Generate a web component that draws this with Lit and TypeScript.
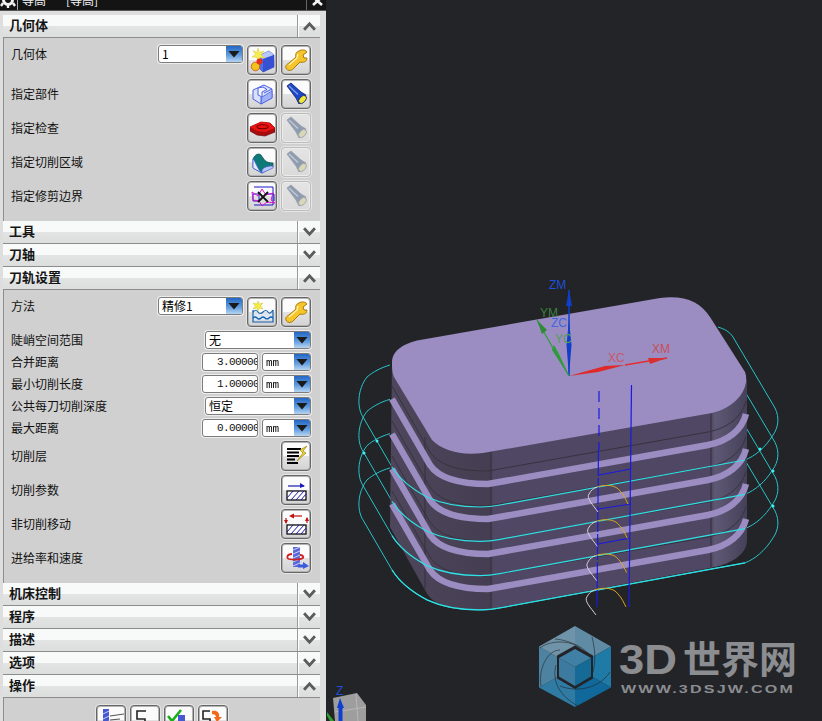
import { LitElement, html, css, svg } from "lit";
import { customElement } from "lit/decorators.js";

const torch = (body: string, dark: string, lens: string) => svg`
  <path d="M3 4 L7 1 L17 10 L22 13 L15 22 L12 16 Z" fill=${body} stroke=${dark} stroke-width=".8"/>
  <path d="M5 4 L14 12.5" stroke="#fff" stroke-opacity=".45" stroke-width="1.4"/>
  <ellipse cx="18.5" cy="17.5" rx="4.8" ry="3" transform="rotate(-48 18.5 17.5)" fill=${lens} stroke=${dark} stroke-width=".8"/>`;

const hatch = (y: number) => svg`
  <rect x="3" y=${y} width="19" height="9" fill="#fff" stroke="#000" stroke-width="1.2"/>
  <path d="M3 ${y + 7} l6 -7 M7 ${y + 9} l8 -9 M12 ${y + 9} l8 -9 M17 ${y + 9} l5 -6" stroke="#1a1aa8" stroke-width="1"/>`;

const ICONS: Record<string, unknown> = {
  geom: svg`
    <path d="M8 8 L19 3 L24 7 L24 19 L13 24 L8 19 Z" fill="#4f6fe8" stroke="#2a3aa0" stroke-width=".6"/>
    <path d="M8 8 L19 3 L24 7 L13 11 Z" fill="#b9c8fa"/><path d="M13 11 L24 7 L24 19 L13 24 Z" fill="#3550d0"/>
    <path d="M8 0 L9.5 4.5 L14 3 L11 7 L15 10 L10.5 9.5 L8 14 L7 9.5 L2 9 L5.5 6.5 L3 2.5 L7 4.5 Z" fill="#f6ee50" stroke="#d8c020" stroke-width=".4"/>
    <circle cx="5.5" cy="18.5" r="4.3" fill="#f2c21c" stroke="#c04010" stroke-width=".7"/>
    <circle cx="9.5" cy="13.5" r="3" fill="#e83018"/>`,
  wrench: svg`
    <path d="M15 3 C18 1 22 2 23 4 L19 7 L20 10 L23 10 C23 14 19 15 16 14 L9 21 C7 23 3 23 2 20 C1 18 3 16 5 15 L12 9 C11 7 12 4 15 3 Z" fill="#f6c52c" stroke="#a87808" stroke-width="1"/>
    <path d="M14 6 L13 10 L5 17" fill="none" stroke="#fff3b0" stroke-width="1.3"/>`,
  block: svg`
    <path d="M3 8 L14 3 L22 7 L22 16 L11 22 L3 17 Z" fill="#d8e0fc" stroke="#4e62e0" stroke-width="1"/>
    <path d="M8 6 L8 13 L12 15 L12 10 L17 7.5 L13 5 Z" fill="#f4f6ff" stroke="#4e62e0" stroke-width="1"/>
    <path d="M11 22 L11 15 M22 7 L14 11" stroke="#4e62e0" stroke-width="1"/>
    <path d="M11 22 L22 16 L22 9 L12 15 Z" fill="#9fb2f6" stroke="#4e62e0" stroke-width=".8"/>`,
  torch: torch("#1c48c8", "#0a1c70", "#f0e838"),
  torchOff: torch("#8f9cb0", "#98a0aa", "#d8d8b8"),
  part: svg`
    <path d="M0 11 L11 6 L20 7 L25 12 L25 16 L15 20 L7 19 L0 15 Z" fill="#a80c0c" stroke="#700808" stroke-width=".7"/>
    <path d="M0 11 L11 6 L20 7 L25 12 L15 16 L7 15 Z" fill="#ea1414"/>
    <ellipse cx="12.5" cy="10.8" rx="5.5" ry="2" fill="none" stroke="#700" stroke-width="1.1"/>`,
  surface: svg`
    <path d="M3 9 C5 4 9 3 11 5 C14 9 15 13 23 13 L23 17 L12 23 L3 18 Z" fill="#0e7a78" stroke="#0a4c50" stroke-width=".7"/>
    <path d="M3 9 C6 12 7 19 12 23 L3 18 Z" fill="#e8ecff" stroke="#4e62e0" stroke-width=".8"/>
    <path d="M12 23 C11 18 16 16 23 16 L23 18 Z" fill="#b8c6f8" stroke="#4e62e0" stroke-width=".7"/>`,
  trim: svg`
    <path d="M4 3 H23 V21 H4" fill="none" stroke="#1818c8" stroke-width="1"/>
    <path d="M3 10 H9 V17 H3 Z M17 10 H24 V17" fill="none" stroke="#1818c8" stroke-width="1"/>
    <path d="M2 8 L8 12 L12 5 L16 11 L23 9 L21 16 L25 19 L17 18 L12 22 L9 17 L3 16 Z" fill="none" stroke="#e010d0" stroke-width="1"/>
    <path d="M8 8 L18 18 M18 8 L8 18" stroke="#111" stroke-width="1.8"/>`,
  water: svg`
    <path d="M8 1 L9 4 L13 3 L10.5 6 L13 9 L9.5 8 L8 11 L7 8 L3 9 L5.5 6 L3 3 L7 4 Z" fill="#f4ec40" stroke="#c8b820" stroke-width=".4"/>
    <path d="M3 14 H23 V20 H3 Z" fill="#dce8f4"/>
    <path d="M3 10 V22 H23 V10" fill="none" stroke="#1460b0" stroke-width="1.2"/>
    <path d="M3 12 q3 -3 5 0 t5 0 t5 0 t5 -2 M3 18 q2 -2 4 0 t4 0 t4 0 t4 0 t4 0" fill="none" stroke="#1460b0" stroke-width="1.2"/>`,
  levels: svg`
    <path d="M3 5 H17 M3 8.5 H15 M3 12 H15 M3 15.5 H11 M3 19 H14" stroke="#000" stroke-width="1.8"/>
    <path d="M23 2 L16 6 L19 9 L13 17 L22 9 L19 7 Z" fill="#f4d830" stroke="#9a8010" stroke-width=".7"/>`,
  params: svg`
    <path d="M4 8 H20" stroke="#1a1ab8" stroke-width="1.2"/><path d="M16 5 L21 8 L16 10 Z" fill="#1a1ab8"/>
    ${hatch(13)}`,
  moves: svg`
    <path d="M7 4 H18" stroke="#c01010" stroke-width="1.2"/><path d="M10 1.5 L5 4 L10 6.5 Z" fill="#c01010"/>
    <path d="M2 6 V11 M23 6 V11" stroke="#c01010" stroke-width="1.2"/>
    <path d="M0 8 L4 8 L2 12 Z M21 9 L25 9 L23 5 Z" fill="#c01010"/>
    ${hatch(13)}`,
  feed: svg`
    <rect x="9" y="1" width="7" height="20" fill="#5a68d8"/>
    <path d="M9 4 L16 1 M9 8 L16 5 M9 12 L16 9 M9 16 L16 13 M9 20 L16 17" stroke="#c8d0f8" stroke-width="1"/>
    <path d="M8 8 C3 8 2 12 5 13 C9 14 16 14 19 12 C20 10 18 9 16 9" fill="none" stroke="#d02020" stroke-width="1.8"/>
    <path d="M14 20 H20" stroke="#3a5ae0" stroke-width="3"/><path d="M19 16 L25 20 L19 23 Z" fill="#3a5ae0"/>`,
  gen: svg`
    <rect x="4" y="1" width="6" height="22" fill="#4858d0"/>
    <path d="M4 6 L10 3 M4 11 L10 8 M4 16 L10 13" stroke="#c8d0f8" stroke-width="1"/>
    <path d="M11 8 L25 6 M11 12 L21 11 M11 16 L19 15" stroke="#555" stroke-width="1.2"/>`,
  replay: svg`<path d="M13 3 H4 V11 H12 V20 H3" fill="none" stroke="#222" stroke-width="1.6"/>`,
  verify: svg`
    <path d="M1 8 L5 13 L14 2" fill="none" stroke="#18b018" stroke-width="2.6"/>
    <rect x="11" y="7" width="7" height="16" fill="#4858d0"/>
    <ellipse cx="13" cy="21" rx="10" ry="4" fill="none" stroke="#e0b010" stroke-width="1.4"/>`,
  post: svg`
    <path d="M9 3 H2 V11 H9 V20 H2" fill="none" stroke="#222" stroke-width="1.6"/>
    <path d="M11 3 C16 2 19 5 18 9 L21 9 L16 14 L13 9 L15 9 C15 7 13 6 11 6 Z" fill="#f06818"/>
    <path d="M12 14 H20 L24 19 V24 H12 Z" fill="#fff" stroke="#6878c8" stroke-width="1"/>`,
};

const CURVE = "M718 327 C724 329 729 331 733 337 L775 408 C780 418 778 428 773 435 C765 448 755 456 745 460 L500 505 C490 507 485 507 480 507 C455 507 440 503 427 497 C412 489 400 480 392 467 L363 417 C357 408 357 390 367 377 C373 372 380 368 390 365";
const CURVE_FRONT = "M745 460 L500 505 C490 507 485 507 480 507 C455 507 440 503 427 497 C412 489 400 480 392 467";
const LEDGE = "M392 399 L430 465 C440 480 462 484 488 484 L708 445 C728 441 742 430 746 414";

@customElement("nx-button")
class NxButton extends LitElement {
  static properties = { icon: {}, off: { type: Boolean } };
  icon = "";
  off = false;

  static styles = css`
    :host { display: block; width: 30px; height: 30px; flex: none; }
    .btn {
      box-sizing: border-box; width: 30px; height: 30px;
      display: flex; align-items: center; justify-content: center;
      border: 1px solid #666; border-radius: 4px;
      background: linear-gradient(#fbfbfb 0 50%, #e2e2e2 50%, #d4d4d4);
      box-shadow: inset 0 0 0 1px #b4b4b4, 0 0 0 1px #e6e6e6;
    }
    .btn.off { border-color: #bcbcbc; background: linear-gradient(#e4e4e4, #dadada); box-shadow: inset 0 0 0 1px #ececec, 0 0 0 1px #e6e6e6; }
    svg { width: 25px; height: 25px; display: block; }
  `;

  render() {
    return html`<div class="btn ${this.off ? "off" : ""}">
      <svg viewBox="0 0 25 25">${ICONS[this.icon]}</svg>
    </div>`;
  }
}

@customElement("nx-select")
class NxSelect extends LitElement {
  static properties = { value: {}, mono: { type: Boolean } };
  value = "";
  mono = false;

  static styles = css`
    :host { display: block; }
    .sel {
      box-sizing: border-box; height: 18px; display: flex;
      border: 1px solid #7c7c7c; border-radius: 3px; background: #fff; overflow: hidden;
      box-shadow: 0 0 0 1px #ececec;
    }
    .val {
      flex: 1; padding-left: 3px; line-height: 16px; font-size: 12px; color: #000;
      font-family: "Noto Sans CJK SC", "Liberation Sans", sans-serif; white-space: nowrap; overflow: hidden;
    }
    /* own layer so the thin stems get grey antialiasing, no colour fringe */
    .val.mono {
      font-family: "Liberation Mono", monospace; font-size: 11px; padding-top: 1px; color: #000;
      transform: translateZ(0);
    }
    .drop {
      width: 16px; flex: none; display: flex; align-items: center; justify-content: center;
      background: linear-gradient(#2467c4, #5d9adc 55%, #b6d4f2);
    }
    .tri { width: 12px; height: 7px; background: #1a1a1a; clip-path: polygon(0 0, 100% 0, 50% 100%); }
  `;

  render() {
    return html`<div class="sel">
      <div class="val ${this.mono ? "mono" : ""}">${this.value}</div>
      <div class="drop"><div class="tri"></div></div>
    </div>`;
  }
}

@customElement("nx-section")
class NxSection extends LitElement {
  static properties = { label: {}, open: { type: Boolean } };
  label = "";
  open = false;

  static styles = css`
    :host { display: block; }
    .head {
      box-sizing: border-box; height: 23px; display: flex; align-items: stretch;
      border-bottom: 1px solid #8c8c8c;
      background: linear-gradient(#f8f9f9 0 50%, #e3e5e5 50%, #dcdede);
    }
    .title {
      flex: 1; padding-left: 6px; line-height: 20px; font-size: 13px; font-weight: 700; color: #151515;
      font-family: "Noto Sans CJK SC", "Liberation Sans", sans-serif;
    }
    .chev {
      width: 22px; flex: none; display: flex; align-items: center; justify-content: center;
      border-left: 1px solid #9a9a9a; box-shadow: inset 1px 0 0 #fff;
    }
    svg { width: 13px; height: 10px; display: block; }
  `;

  render() {
    return html`
      <div class="head">
        <div class="title">${this.label}</div>
        <div class="chev">
          <svg viewBox="0 0 12 9">
            <path d=${this.open ? "M1 8 L6 2.5 L11 8" : "M1 1 L6 6.5 L11 1"} fill="none" stroke="#5c5c5c" stroke-width="2.6"/>
          </svg>
        </div>
      </div>
      <slot></slot>`;
  }
}

@customElement("app-root")
export class AppRoot extends LitElement {
  static styles = css`
    :host {
      display: flex; width: 822px; height: 721px; overflow: hidden; background: #232428;
      font-family: "Noto Sans CJK SC", "Liberation Sans", sans-serif;
    }
    .panel { width: 326px; height: 721px; flex: none; background: #dedede; overflow: hidden; }
    .titlebar {
      height: 10px; background: #141414; color: #f0f0f0; display: flex; overflow: hidden;
      border-bottom: 1px solid #555;
    }
    .gear { width: 17px; height: 10px; flex: none; border-right: 1px solid #aaa; }
    .gear svg, .close svg { display: block; }
    .titletext {
      flex: 1; display: flex; gap: 20px; padding-left: 4px;
      font-size: 12px; line-height: 12px; margin-top: -6px; white-space: nowrap;
    }
    .close { width: 19px; height: 10px; flex: none; border-left: 1px solid #666; }
    .sections { margin: 4px 6px 0 3px; }
    .body {
      box-sizing: border-box; background: #d0d0d0; border-left: 1px solid #8e8e8e;
      padding: 7px 9px 10px 7px; display: flex; flex-direction: column; gap: 4px;
    }
    .row { display: flex; align-items: center; gap: 4px; min-height: 18px; }
    .row.top { align-items: flex-start; }
    .label { flex: 1; font-size: 12px; line-height: 18px; color: #111; white-space: nowrap; }
    .num {
      box-sizing: border-box; width: 56px; height: 18px; flex: none; overflow: hidden;
      background: #fff; border: 1px solid #7c7c7c; border-radius: 3px; box-shadow: 0 0 0 1px #ececec;
      font-family: "Liberation Mono", monospace; font-size: 11px; letter-spacing: -0.6px; line-height: 16px;
      padding-left: 14px; white-space: nowrap; color: #111;
    }
    .actions { display: flex; justify-content: center; gap: 4px; padding: 7px 0; background: #d0d0d0; border-left: 1px solid #8e8e8e; }
    .view { flex: 1; height: 721px; overflow: hidden; }
    .view svg { display: block; width: 496px; height: 721px; }
    .axis { font-family: "Liberation Sans", sans-serif; font-size: 12px; }
    .brand { font-family: "Liberation Sans", sans-serif; font-weight: 700; fill: #8b8d90; }
    .brandcn { font-family: "Noto Sans CJK SC", sans-serif; font-weight: 700; fill: #8b8d90; }
  `;

  private buttons(a: string, b: string, off = false) {
    return html`<nx-button .icon=${a}></nx-button><nx-button .icon=${b} .off=${off}></nx-button>`;
  }

  private numRow(label: string, value: string) {
    return html`<div class="row">
      <div class="label">${label}</div>
      <div class="num">${value}</div>
      <nx-select style="width:49px" .value=${"mm"} mono></nx-select>
    </div>`;
  }

  private selRow(label: string, value: string) {
    return html`<div class="row">
      <div class="label">${label}</div>
      <nx-select style="width:106px" .value=${value}></nx-select>
    </div>`;
  }

  private iconRow(label: string, icon: string) {
    return html`<div class="row"><div class="label">${label}</div><nx-button .icon=${icon}></nx-button></div>`;
  }

  private renderPanel() {
    return html`
      <div class="panel">
        <div class="titlebar">
          <div class="gear">
            <svg viewBox="0 0 16 10" width="16" height="10">
              <circle cx="8" cy="0" r="4.5" fill="none" stroke="#f2f2f2" stroke-width="3"/>
              <path d="M8 4 V8 M3 3 L1 6 M13 3 L15 6" stroke="#f2f2f2" stroke-width="2.4"/>
            </svg>
          </div>
          <div class="titletext"><span>等高</span><span>[等高]</span></div>
          <div class="close">
            <svg viewBox="0 0 19 10" width="19" height="10">
              <path d="M6 -3 L15 5 M15 -3 L6 5" stroke="#f4f4f4" stroke-width="2.6"/>
            </svg>
          </div>
        </div>
        <div class="sections">
          <nx-section .label=${"几何体"} open>
            <div class="body">
              <div class="row top">
                <div class="label">几何体</div>
                <nx-select style="width:85px" .value=${"1"}></nx-select>
                ${this.buttons("geom", "wrench")}
              </div>
              <div class="row"><div class="label">指定部件</div>${this.buttons("block", "torch")}</div>
              <div class="row"><div class="label">指定检查</div>${this.buttons("part", "torchOff", true)}</div>
              <div class="row"><div class="label">指定切削区域</div>${this.buttons("surface", "torchOff", true)}</div>
              <div class="row"><div class="label">指定修剪边界</div>${this.buttons("trim", "torchOff", true)}</div>
            </div>
          </nx-section>
          <nx-section .label=${"工具"}></nx-section>
          <nx-section .label=${"刀轴"}></nx-section>
          <nx-section .label=${"刀轨设置"} open>
            <div class="body">
              <div class="row top">
                <div class="label">方法</div>
                <nx-select style="width:85px" .value=${"精修1"}></nx-select>
                ${this.buttons("water", "wrench")}
              </div>
              ${this.selRow("陡峭空间范围", "无")}
              ${this.numRow("合并距离", "3.00000")}
              ${this.numRow("最小切削长度", "1.00000")}
              ${this.selRow("公共每刀切削深度", "恒定")}
              ${this.numRow("最大距离", "0.00000")}
              ${this.iconRow("切削层", "levels")}
              ${this.iconRow("切削参数", "params")}
              ${this.iconRow("非切削移动", "moves")}
              ${this.iconRow("进给率和速度", "feed")}
            </div>
          </nx-section>
          <nx-section .label=${"机床控制"}></nx-section>
          <nx-section .label=${"程序"}></nx-section>
          <nx-section .label=${"描述"}></nx-section>
          <nx-section .label=${"选项"}></nx-section>
          <nx-section .label=${"操作"} open>
            <div class="actions">
              <nx-button .icon=${"gen"}></nx-button>
              <nx-button .icon=${"replay"}></nx-button>
              <nx-button .icon=${"verify"}></nx-button>
              <nx-button .icon=${"post"}></nx-button>
            </div>
          </nx-section>
        </div>
      </div>`;
  }

  private renderPart() {
    const levels = [0, 1, 2, 3];
    return svg`
      <defs>
        <linearGradient id="side" gradientUnits="userSpaceOnUse" x1="390" y1="0" x2="747" y2="0">
          <stop offset="0" stop-color="#4e465c"/><stop offset=".1" stop-color="#4b4458"/>
          <stop offset=".28" stop-color="#453e52"/><stop offset=".29" stop-color="#4f4763"/>
          <stop offset=".9" stop-color="#4f4763"/><stop offset=".91" stop-color="#5e5874"/>
          <stop offset="1" stop-color="#46415a"/>
        </linearGradient>
      </defs>
      ${levels.map((k) => svg`<path d=${CURVE} transform="translate(0 ${k * 34.3})" fill="none" stroke="#27c4c8" stroke-width="1"/>`)}
      <path d="M392 362 L390 527 L425 590 C432 604 445 610 490 609 L710 568 C728 565 747 556 747 540 L747 380 Z" fill="url(#side)"/>
      <path d="M491 450 V609 M711 412 V568 M425 437 V590" stroke="#35303f" stroke-width="1"/>
      ${levels.map((k) => svg`
        <g transform="translate(0 ${k * 35})">
          <path d=${LEDGE} transform="translate(0 -13)" fill="none" stroke="#38323f" stroke-width="1"/>
          <path d=${LEDGE} fill="none" stroke="#9b8cc1" stroke-width="6.5"/>
        </g>`)}
      <path d="M392 362 C392 350 405 343 420 340 L660 298 C685 295 700 302 710 317 L745 372 C750 385 740 406 712 413 L483 453 C460 456 442 450 432 440 L394 377 C392 372 392 368 392 362 Z" fill="#9b8cc1"/>
      ${levels.map((k) => svg`<path d=${CURVE_FRONT} transform="translate(0 ${k * 34.3})" fill="none" stroke="#2fe0e4" stroke-width="1.2"/>`)}
      ${[[377, 441], [364, 453], [760, 449], [773, 471], [773, 506]].map(([x, y]) => svg`<circle cx=${x} cy=${y} r="1.5" fill="#3ff0f0"/>`)}

      <path d="M599 391 V450" stroke="#1a1ae0" stroke-width="1.2" stroke-dasharray="11 6"/>
      <path d="M598.5 450 L597 607" stroke="#1a1ae0" stroke-width="1.2" stroke-dasharray="26 2"/>
      <path d="M631.5 385 L629 607" stroke="#1a1ae0" stroke-width="1.2"/>
      <path d="M599 475 L631 469 M598 509 L631 504 M598 544 L630 538" stroke="#1a1ae0" stroke-width="1.2"/>
      ${levels.map((k) => svg`
        <g transform="translate(${-k * 0.7} ${k * 34.3})">
          <path d="M598 512 C593 505 586 498 589 494 C591 490 594 488 597 487" fill="none" stroke="#ddd0dc" stroke-width="1"/>
          <path d="M597 487 C606 484 616 485 620 491 C624 495 626 500 628 504" fill="none" stroke="#d8a820" stroke-width="1"/>
        </g>`)}`;
  }

  private renderTriad() {
    return svg`
      <path d="M569 376 L569 290" stroke="#0f3fd0" stroke-width="1.5"/>
      <path d="M569 376 L566.5 345 L569 320 L571.5 345 Z M569 290 L566 306 L572 306 Z" fill="#0f3fc8"/>
      <path d="M569 376 L537 320" stroke="#2fa040" stroke-width="1.3"/>
      <path d="M569 376 L552 350 L554 345 L559 354 Z" fill="#2f9a3c"/>
      <path d="M537 320 L547 330 L542 334 Z" fill="#2f8a38"/>
      <path d="M569 376 L605 366 L625 365 L598 372 Z" fill="#e02a2a"/>
      <path d="M625 365 L667 358" stroke="#e03030" stroke-width="1.4"/>
      <path d="M667 358 L648 358 L650 364 Z" fill="#d83030"/>
      <text class="axis" x="549" y="289" fill="#1c50d8">ZM</text>
      <text class="axis" x="540" y="317" fill="#3d803d">YM</text>
      <text class="axis" x="551" y="327" fill="#3c68e0">ZC</text>
      <text class="axis" x="555" y="343" fill="#56a056">YC</text>
      <text class="axis" x="608" y="362" fill="#c8586a">XC</text>
      <text class="axis" x="652" y="353" fill="#c8505c">XM</text>

      <path d="M333 698 L357 693 L366 705 L366 721 L335 721 Z" fill="#9e9e9e"/>
      <path d="M335 712 L366 707 M356 694 L358 721" stroke="#b8b8b8" stroke-width="1"/>
      <path d="M327 712 L334 721 L330 721 L327 716 Z" fill="#2fa030"/>
      <path d="M340 698 L337 708 L338.5 708 L338.5 721 L342.5 721 L342.5 708 L344 708 Z" fill="#0f3fd0"/>
      <text class="axis" x="336" y="695" fill="#1c50d8">Z</text>`;
  }

  private renderLogo() {
    const c: [number, number] = [575, 667];
    const hex: [number, number][] = [[575, 626], [611, 646.5], [611, 687.5], [575, 707], [539, 687.5], [539, 646.5]];
    const fills = ["#5f8ba5", "#1f7aa6", "#10699a", "#2f7ba3", "#4d83a1", "#6f93a8"];
    return svg`
      ${hex.map((p, i) => {
        const q = hex[(i + 1) % 6];
        return svg`<path d="M${c[0]} ${c[1]} L${p[0]} ${p[1]} L${q[0]} ${q[1]} Z" fill=${fills[i]}/>`;
      })}
      <path d="M555 639 C570 640 590 650 592 660 M592 637 C596 652 596 668 590 680 M610 672 C598 690 575 692 560 686 M578 706 C558 695 552 680 556 665 M541 686 C538 668 548 650 560 650 M540 648 C550 640 570 640 580 648" fill="none" stroke="#232428" stroke-width=".6"/>
      <path d="M575 645.5 L593 655.5 L593 678.5 L575 689 L557 678.5 L557 655.5 Z" fill="#232428"/>
      <path d="M575 649 L591 658 L575 667 L559 658 Z" fill="#3f80a4"/>
      <path d="M559 658 L575 667 L575 686 L559 676.5 Z" fill="#3d7a9f"/>
      <path d="M591 658 L575 667 L575 686 L591 676.5 Z" fill="#156a96"/>
      <text class="brand" x="619" y="674" font-size="43" textLength="58" lengthAdjust="spacingAndGlyphs">3D</text>
      <text class="brandcn" x="683" y="673" font-size="38">世界网</text>
      <text class="brand" x="621" y="693" font-size="11" textLength="174" lengthAdjust="spacingAndGlyphs" letter-spacing="1.5">WWW.3DSJW.COM</text>`;
  }

  render() {
    return html`
      ${this.renderPanel()}
      <div class="view">
        <svg viewBox="326 0 496 721">
          ${this.renderPart()} ${this.renderTriad()} ${this.renderLogo()}
        </svg>
      </div>`;
  }
}
